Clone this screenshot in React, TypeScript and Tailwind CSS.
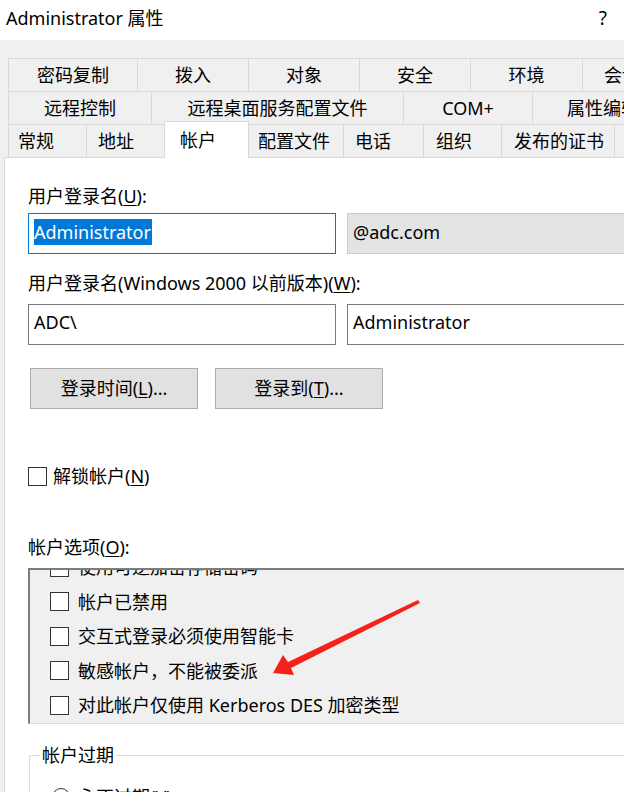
import React from "react";

const font = { fontFamily: '"Noto Sans", "Noto Sans CJK SC", sans-serif' };

type Tab = { label: string; w: number; pl?: number; center?: boolean; active?: boolean };

const row1: Tab[] = [
  { label: "密码复制", w: 129, center: true },
  { label: "拨入", w: 111, center: true },
  { label: "对象", w: 111, center: true },
  { label: "安全", w: 111, center: true },
  { label: "环境", w: 112, center: true },
  { label: "会话", w: 100, pl: 21 },
];

const row2: Tab[] = [
  { label: "远程控制", w: 143, center: true },
  { label: "远程桌面服务配置文件", w: 252, center: true },
  { label: "COM+", w: 129, center: true },
  { label: "属性编辑器", w: 140, pl: 34 },
];

const row3: Tab[] = [
  { label: "常规", w: 78, pl: 9 },
  { label: "地址", w: 78, pl: 11 },
  { label: "帐户", w: 84, pl: 15, active: true },
  { label: "配置文件", w: 95, pl: 9 },
  { label: "电话", w: 80, pl: 11 },
  { label: "组织", w: 78, pl: 12 },
  { label: "发布的证书", w: 113, pl: 12 },
  { label: "", w: 40 },
];

function TabCell({ tab }: { tab: Tab }) {
  if (tab.active) {
    return (
      <div
        className="relative z-10 h-[37px] -mb-px shrink-0 flex items-start pt-[7px] bg-white border-l border-t border-r border-[#d9d9d9] -mr-px"
        style={{ width: tab.w + 1, paddingLeft: tab.pl }}
      >
        {tab.label}
      </div>
    );
  }
  return (
    <div
      className={`h-full shrink-0 flex items-center border-l border-t border-[#d9d9d9] bg-[#f0f0f0] ${
        tab.center ? "justify-center" : ""
      }`}
      style={{ width: tab.w, paddingLeft: tab.pl }}
    >
      {tab.label}
    </div>
  );
}

function CheckBox() {
  return <span className="w-[19px] h-[19px] shrink-0 border border-[#333] bg-white" />;
}

function U({ children }: { children: React.ReactNode }) {
  return <span className="underline underline-offset-2">{children}</span>;
}

const options = [
  "使用可逆加密存储密码",
  "帐户已禁用",
  "交互式登录必须使用智能卡",
  "敏感帐户，不能被委派",
  "对此帐户仅使用 Kerberos DES 加密类型",
];

export default function App() {
  return (
    <div
      className="relative w-[624px] h-[792px] overflow-hidden bg-[#f0f0f0] text-[18px] leading-[22px] text-black"
      style={font}
    >
      {/* 标题栏 */}
      <div className="h-[40px] bg-white flex items-center justify-between pl-[6px] pr-[17px] pb-[5px]">
        <span>Administrator 属性</span>
        <span className="text-[19px]">?</span>
      </div>

      {/* 选项卡 */}
      <div className="pt-[18px] pl-[8px] w-[700px]">
        <div className="flex h-[33px]">
          {row1.map((t) => (
            <TabCell key={t.label} tab={t} />
          ))}
        </div>
        <div className="flex h-[33px]">
          {row2.map((t) => (
            <TabCell key={t.label} tab={t} />
          ))}
        </div>
        <div className="flex h-[33px] items-end">
          {row3.map((t, i) => (
            <TabCell key={i} tab={t} />
          ))}
        </div>
      </div>

      {/* 帐户页 */}
      <div className="ml-[4px] w-[700px] h-[700px] bg-white border-l border-t border-[#d9d9d9] pl-[23px] pt-[27px]">
        <div className="h-[22px] flex items-center">
          用户登录名(<U>U</U>):
        </div>
        <div className="mt-[6px] flex gap-[11px] h-[41px]">
          <div className="w-[308px] h-full border border-[#0078d7] bg-white flex items-center pl-[5px] pb-[4px]">
            <span className="bg-[#0078d7] text-white h-[26px] flex items-center pr-[1px]">Administrator</span>
          </div>
          <div className="flex-1 h-full border border-[#cccccc] bg-[#e3e3e3] flex items-center pl-[5px] pb-[4px]">
            @adc.com
          </div>
        </div>

        <div className="mt-[18px] h-[22px] flex items-center">
          用户登录名(Windows 2000 以前版本)(<U>W</U>):
        </div>
        <div className="mt-[10px] flex gap-[11px] h-[41px]">
          <div className="w-[308px] h-full border border-[#7a7a7a] bg-white flex items-center pl-[5px] pb-[5px]">
            ADC\
          </div>
          <div className="flex-1 h-full border border-[#7a7a7a] bg-white flex items-center pl-[5px] pb-[5px]">
            Administrator
          </div>
        </div>

        <div className="mt-[23px] ml-[2px] flex gap-[17px]">
          <button className="w-[168px] h-[41px] pb-[2px] bg-[#e1e1e1] border border-[#adadad]">
            登录时间(<U>L</U>)...
          </button>
          <button className="w-[168px] h-[41px] pb-[2px] bg-[#e1e1e1] border border-[#adadad]">
            登录到(<U>T</U>)...
          </button>
        </div>

        <div className="mt-[56px] h-[22px] flex items-center gap-[6px]">
          <CheckBox />
          <span>
            解锁帐户(<U>N</U>)
          </span>
        </div>

        <div className="mt-[49px] h-[22px] flex items-center">
          帐户选项(<U>O</U>):
        </div>

        <div className="mt-[10px] h-[156px] overflow-hidden bg-[#f0f0f0] border-t-2 border-l-2 border-r border-b border-t-[#7c7c7c] border-l-[#7c7c7c] border-r-[#dadada] border-b-[#dadada] pl-[20px]">
          <div className="-mt-[20px]">
            {options.map((o) => (
              <div key={o} className="h-[34.5px] flex items-center gap-[9px]">
                <CheckBox />
                <span>{o}</span>
              </div>
            ))}
          </div>
        </div>

        <fieldset className="mt-[20px] ml-px border border-[#dcdcdc] pl-[10px] h-[120px]">
          <legend className="px-[2px] leading-[22px]">帐户过期</legend>
          <div className="mt-[20px] h-[22px] flex items-center gap-[8px] pl-[12px]">
            <span className="w-[18px] h-[18px] rounded-full border border-[#333] bg-white" />
            <span>
              永不过期(<U>V</U>)
            </span>
          </div>
        </fieldset>
      </div>

      {/* 红色箭头标注 */}
      <svg className="absolute left-0 top-0 pointer-events-none" width="624" height="792">
        <polygon
          points="418,600 420,603 291,668 294,675 273,673 283,655 288,662"
          fill="#f5221a"
        />
      </svg>
    </div>
  );
}
